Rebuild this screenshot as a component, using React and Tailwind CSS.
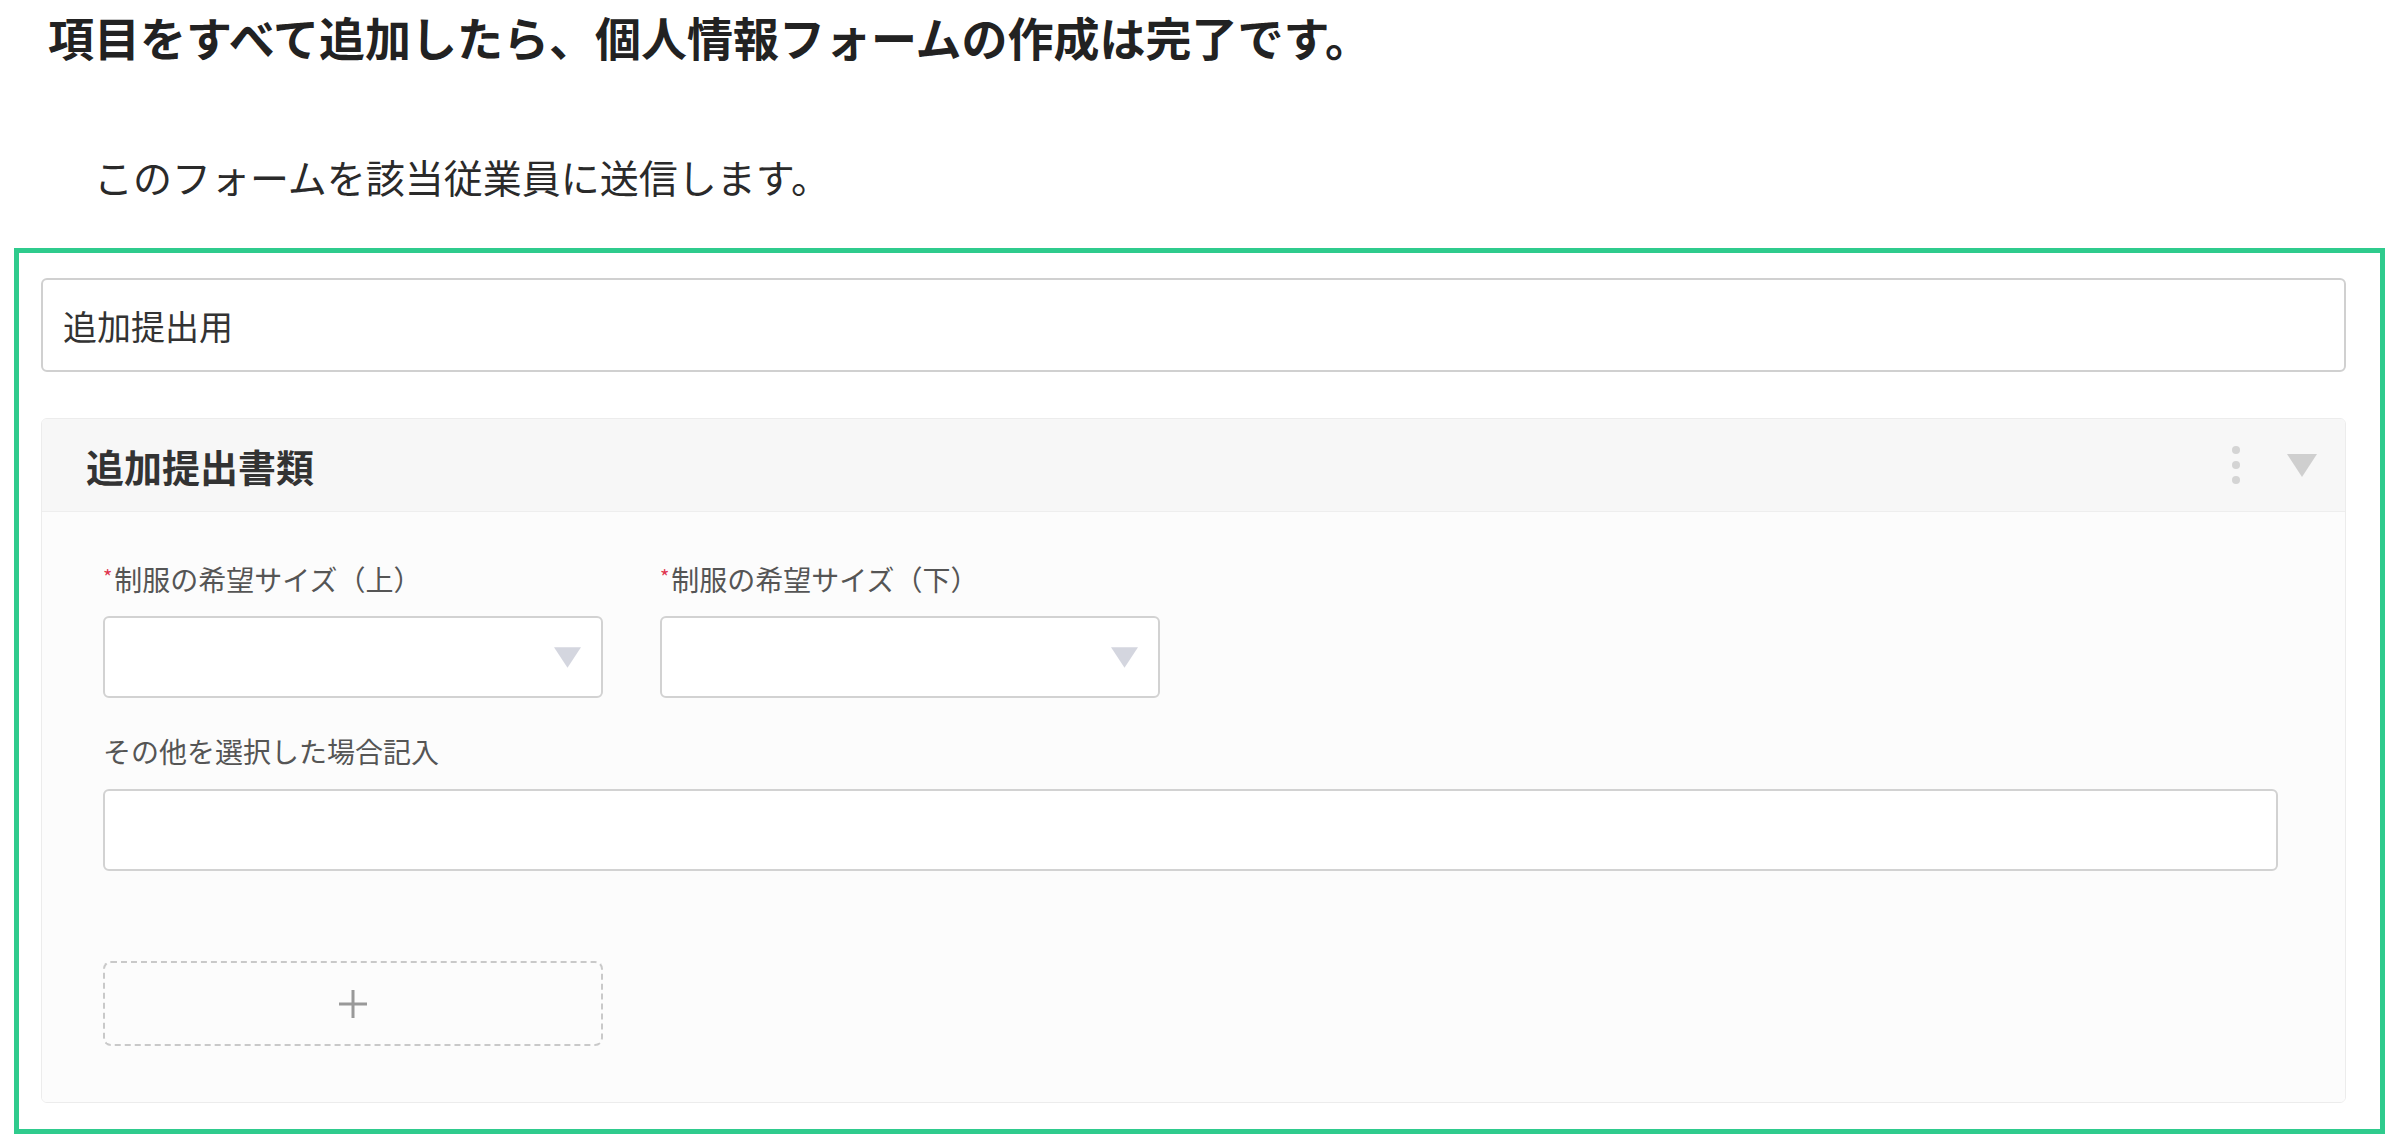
import React from 'react';

const font = { fontFamily: '"Noto Sans CJK JP", "Noto Sans", sans-serif' };

// Down-pointing triangle used on selects and the section header
function Caret({ className }) {
    return (
        <svg viewBox="0 0 30 23" className={className}>
            <polygon points="0,0 30,0 15,23" fill="currentColor" />
        </svg>
    );
}

function SelectBox() {
    return (
        <div className="w-[500px] h-[82px] border-2 border-[#d2d2d2] rounded-[6px] bg-white flex items-center justify-end pr-[20px]">
            <Caret className="w-[27px] h-[21px] text-[#d4d6df]" />
        </div>
    );
}

function FieldLabel({ required, children }) {
    return (
        <div className="flex items-center text-[28px] leading-[34px] text-[#555]">
            {required && <span className="text-[#e0364f] text-[20px] leading-none mr-[2px] -mt-[4px]">*</span>}
            <span>{children}</span>
        </div>
    );
}

export default function App() {
    return (
        <div className="w-[2400px] min-h-screen bg-white" style={font}>
            <h1 className="pl-[48px] pt-[9px] text-[46px] leading-[54px] font-bold text-[#222]">
                項目をすべて追加したら、個人情報フォームの作成は完了です。
            </h1>

            <p className="mt-[90px] pl-[94px] text-[39px] leading-[46px] text-[#2a2a2a]">
                このフォームを該当従業員に送信します。
            </p>

            <div className="mt-[49px] ml-[14px] w-[2371px] border-[5px] border-[#2fcb8d] pt-[25px] pl-[22px] pr-[34px] pb-[26px]">
                {/* Form title */}
                <div className="h-[94px] border-2 border-[#d0d0d0] rounded-[6px] px-[20px] flex items-center text-[34px] text-[#333] bg-white">
                    追加提出用
                </div>

                {/* Section card */}
                <div className="mt-[46px] border border-[#ececec] rounded-[6px] overflow-hidden">
                    <div className="h-[92px] bg-[#f7f7f7] pl-[44px] pr-[28px] flex items-center justify-between">
                        <span className="text-[38px] font-bold text-[#333]">追加提出書類</span>
                        <div className="flex items-center gap-[47px]">
                            <div className="flex flex-col gap-[7px]">
                                <span className="w-[8px] h-[8px] rounded-full bg-[#d4d4d4]"></span>
                                <span className="w-[8px] h-[8px] rounded-full bg-[#d4d4d4]"></span>
                                <span className="w-[8px] h-[8px] rounded-full bg-[#d4d4d4]"></span>
                            </div>
                            <Caret className="w-[30px] h-[23px] text-[#cfcfcf]" />
                        </div>
                    </div>

                    <div className="bg-[#fcfcfc] border-t border-[#eeeeee] pl-[61px] pr-[67px] pt-[50px] pb-[56px]">
                        <div className="flex gap-[57px]">
                            <div>
                                <FieldLabel required>制服の希望サイズ（上）</FieldLabel>
                                <div className="mt-[20px]">
                                    <SelectBox />
                                </div>
                            </div>
                            <div>
                                <FieldLabel required>制服の希望サイズ（下）</FieldLabel>
                                <div className="mt-[20px]">
                                    <SelectBox />
                                </div>
                            </div>
                        </div>

                        <div className="mt-[36px]">
                            <FieldLabel>その他を選択した場合記入</FieldLabel>
                        </div>
                        <div className="mt-[21px] h-[82px] border-2 border-[#d2d2d2] rounded-[6px] bg-white"></div>

                        {/* Add item button */}
                        <div className="mt-[90px] w-[500px] h-[85px] border-2 border-dashed border-[#c9c9c9] rounded-[8px] flex items-center justify-center">
                            <svg viewBox="0 0 30 30" className="w-[30px] h-[30px]">
                                <line x1="15" y1="1" x2="15" y2="29" stroke="#999" strokeWidth="3" />
                                <line x1="1" y1="15" x2="29" y2="15" stroke="#999" strokeWidth="3" />
                            </svg>
                        </div>
                    </div>
                </div>
            </div>
        </div>
    );
}
